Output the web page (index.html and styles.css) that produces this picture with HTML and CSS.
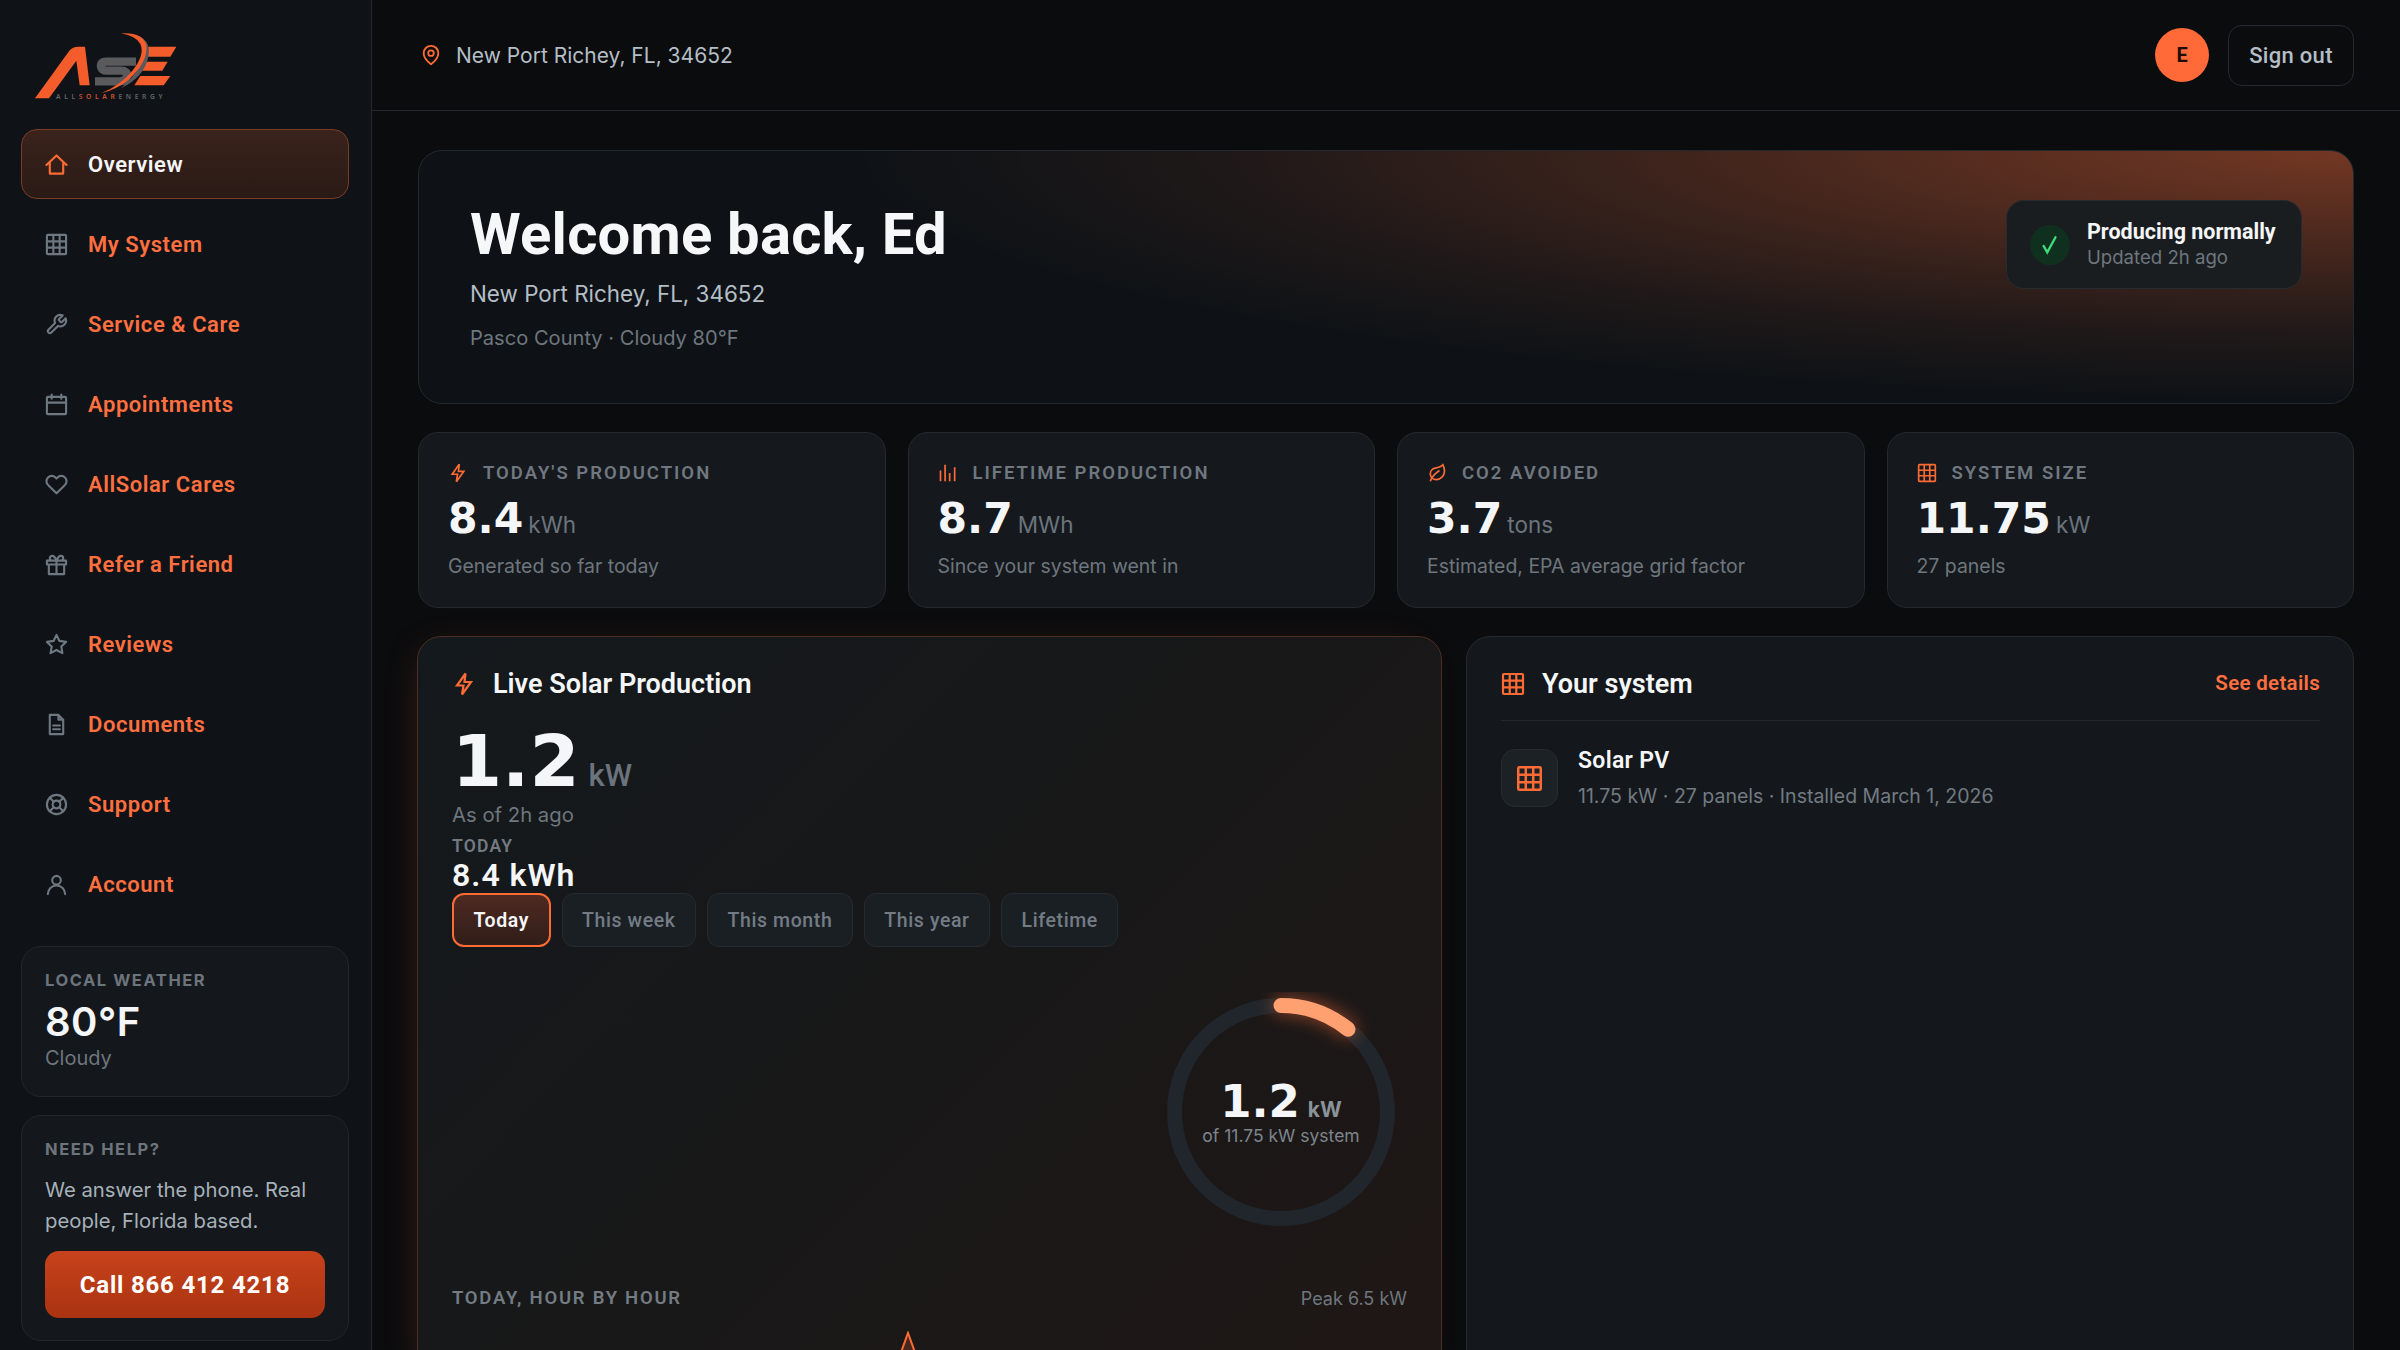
FILE: index.html
```html
<!DOCTYPE html>
<html lang="en">
<head>
<meta charset="utf-8">
<title>AllSolar Energy</title>
<link rel="stylesheet" href="styles.css">
</head>
<body>
<svg class="defs" width="0" height="0" aria-hidden="true">
  <symbol id="i-grid" viewBox="0 0 24 24"><rect x="2" y="2" width="20" height="20" rx="1"/><path d="M2 8.7h20M2 15.3h20M8.7 2v20M15.3 2v20"/></symbol>
  <symbol id="i-bolt" viewBox="0 0 24 24"><path d="M13.5 1.5 5 13.5h6.5L10 22.5l9-12.5h-6.5z"/></symbol>
</svg>
<div class="app">
  <aside class="sidebar">
    <svg class="logo" viewBox="0 0 510 270" width="170" height="90">
      <path class="lo" d="M42 235 145 92Q155 80 172 80H192L206 196H176L166 122 84 235Z"/>
      <path class="ls" d="M345 125H255Q238 125 240 140Q243 152 258 152H300Q320 152 318 168Q316 184 296 184H222"/>
      <path class="lo" d="M382 80H466L448 110H372ZM372 125H440L424 152H362ZM358 168H448L428 196H340Z"/>
      <path class="lg" d="M345 46Q392 60 382 110Q370 170 300 205Q355 160 368 105Q374 70 345 46Z"/>
      <path class="lo" d="M300 40Q366 36 376 76Q382 126 322 180Q284 210 240 220Q300 196 336 150Q372 104 358 72Q346 48 300 40Z"/>
      <text class="logo-text" x="105" y="238"><tspan class="lt-g">ALL</tspan><tspan class="lt-o">SOLAR</tspan><tspan class="lt-g">ENERGY</tspan></text>
    </svg>
    <nav class="nav">
      <a class="nav-item active"><svg class="ic" viewBox="0 0 24 24"><path d="M1.5 12.5 12 2.5l10.5 10M5 10v11.5h14V10"/></svg><span>Overview</span></a>
      <a class="nav-item"><svg class="ic"><use href="#i-grid"/></svg><span>My System</span></a>
      <a class="nav-item"><svg class="ic" viewBox="0 0 24 24"><path d="M14.7 6.3a1 1 0 0 0 0 1.4l1.6 1.6a1 1 0 0 0 1.4 0l3.77-3.77a6 6 0 0 1-7.94 7.94l-6.91 6.91a2.12 2.12 0 0 1-3-3l6.91-6.91a6 6 0 0 1 7.94-7.94l-3.76 3.76z"/></svg><span>Service &amp; Care</span></a>
      <a class="nav-item"><svg class="ic" viewBox="0 0 24 24"><rect x="2" y="4" width="20" height="18" rx="1"/><path d="M2 10h20M7 1.5V6M17 1.5V6"/></svg><span>Appointments</span></a>
      <a class="nav-item"><svg class="ic" viewBox="0 0 24 24"><path d="M20.84 4.61a5.5 5.5 0 0 0-7.78 0L12 5.67l-1.06-1.06a5.5 5.5 0 0 0-7.78 7.78l1.06 1.06L12 21.23l7.78-7.78 1.06-1.06a5.5 5.5 0 0 0 0-7.78z"/></svg><span>AllSolar Cares</span></a>
      <a class="nav-item"><svg class="ic" viewBox="0 0 24 24"><path d="M2 8h20v4H2zM12 8v14M4 12v10h16V12M7.5 8a2.5 2.5 0 0 1 0-5C10 3 12 8 12 8s2-5 4.500-5a2.500 2.500 0 0 1 0 5"/></svg><span>Refer a Friend</span></a>
      <a class="nav-item"><svg class="ic" viewBox="0 0 24 24"><polygon points="12 2 15.09 8.26 22 9.27 17 14.14 18.18 21.02 12 17.77 5.82 21.02 7 14.14 2 9.27 8.91 8.26 12 2"/></svg><span>Reviews</span></a>
      <a class="nav-item"><svg class="ic" viewBox="0 0 24 24"><path d="M14 2H5v20h14V7zM14 2v5h5M8.500 13h7M8.500 17h7"/></svg><span>Documents</span></a>
      <a class="nav-item"><svg class="ic" viewBox="0 0 24 24"><circle cx="12" cy="12" r="10"/><circle cx="12" cy="12" r="4"/><path d="m4.930 4.930 4.240 4.240M14.830 9.170l4.240-4.240M14.830 14.830l4.240 4.240M9.170 14.830l-4.240 4.240"/></svg><span>Support</span></a>
      <a class="nav-item"><svg class="ic" viewBox="0 0 24 24"><circle cx="12" cy="7.500" r="4.500"/><path d="M3 22a9 9 0 0 1 18 0"/></svg><span>Account</span></a>
    </nav>
    <section class="side-card weather">
      <div class="side-label">LOCAL WEATHER</div>
      <div class="temp">80°F</div>
      <div class="cond">Cloudy</div>
    </section>
    <section class="side-card help">
      <div class="side-label">NEED HELP?</div>
      <p class="help-text">We answer the phone. Real people, Florida based.</p>
      <a class="call">Call 866 412 4218</a>
    </section>
  </aside>
  <main class="main">
    <header class="topbar">
      <div class="loc"><svg class="ic-pin" viewBox="0 0 24 24"><path d="M20 10c0 6-8 12-8 12s-8-6-8-12a8 8 0 0 1 16 0Z"/><circle cx="12" cy="10" r="3"/></svg><span>New Port Richey, FL, 34652</span></div>
      <div class="top-right"><div class="avatar">E</div><a class="signout">Sign out</a></div>
    </header>
    <div class="content">
      <section class="hero">
        <div class="hero-copy">
          <h1>Welcome back, Ed</h1>
          <p class="hero-loc">New Port Richey, FL, 34652</p>
          <p class="hero-meta">Pasco County · Cloudy 80°F</p>
        </div>
        <div class="status">
          <span class="check"><svg viewBox="0 0 24 24"><path d="M5 13l4 7L18 3.500"/></svg></span>
          <div><div class="status-a">Producing normally</div><div class="status-b">Updated 2h ago</div></div>
        </div>
      </section>
      <section class="stats">
        <article class="stat">
          <div class="stat-label"><svg class="ic-o"><use href="#i-bolt"/></svg>TODAY'S PRODUCTION</div>
          <div class="stat-value"><b>8.4</b><span>kWh</span></div>
          <div class="stat-sub">Generated so far today</div>
        </article>
        <article class="stat">
          <div class="stat-label"><svg class="ic-o" viewBox="0 0 24 24"><path d="M3 9v13M8.500 2v20M14 12v10M20 5v17"/></svg>LIFETIME PRODUCTION</div>
          <div class="stat-value"><b>8.7</b><span>MWh</span></div>
          <div class="stat-sub">Since your system went in</div>
        </article>
        <article class="stat">
          <div class="stat-label"><svg class="ic-o" viewBox="0 0 24 24"><path d="M11 20A7 7 0 0 1 9.800 6.100C15.500 5 17 4.480 19 2c1 2 2 4.180 2 8 0 5.500-4.780 10-10 10Z"/><path d="M4 22c1-4 5-9 11-13"/></svg>CO2 AVOIDED</div>
          <div class="stat-value"><b>3.7</b><span>tons</span></div>
          <div class="stat-sub">Estimated, EPA average grid factor</div>
        </article>
        <article class="stat">
          <div class="stat-label"><svg class="ic-o"><use href="#i-grid"/></svg>SYSTEM SIZE</div>
          <div class="stat-value"><b>11.75</b><span>kW</span></div>
          <div class="stat-sub">27 panels</div>
        </article>
      </section>
      <section class="panels">
        <article class="panel live">
          <h2 class="panel-title"><svg class="ic-title"><use href="#i-bolt"/></svg>Live Solar Production</h2>
          <div class="big"><b>1.2</b><span>kW</span></div>
          <div class="asof">As of 2h ago</div>
          <div class="today-label">TODAY</div>
          <div class="today-val">8.4 kWh</div>
          <div class="tabs">
            <a class="tab on">Today</a><a class="tab">This week</a><a class="tab">This month</a><a class="tab">This year</a><a class="tab">Lifetime</a>
          </div>
          <div class="gauge-row">
            <div class="gauge">
              <svg viewBox="0 0 240 240" width="240" height="240">
                <circle class="g-track" cx="120" cy="120" r="106.500"/>
                <path class="g-glow" d="M120 13.500A106.500 106.500 0 0 1 187 37.200"/>
                <path class="g-arc" d="M120 13.500A106.500 106.500 0 0 1 187 37.200"/>
              </svg>
              <div class="g-center">
                <div class="g-val"><b>1.2</b><span>kW</span></div>
                <div class="g-sub">of 11.75 kW system</div>
              </div>
            </div>
          </div>
          <div class="chart-head"><span class="chart-title">TODAY, HOUR BY HOUR</span><span class="chart-peak">Peak 6.5 kW</span></div>
          <svg class="chart" viewBox="0 0 954 60" width="954" height="60"><path class="c-fill" d="M435 60 456 2 477 60Z"/><path class="c-line" d="M435 60 456 2 477 60"/></svg>
        </article>
        <article class="panel sys">
          <div class="sys-head">
            <h2 class="panel-title"><svg class="ic-title grid"><use href="#i-grid"/></svg>Your system</h2>
            <a class="details">See details</a>
          </div>
          <div class="sys-row">
            <span class="sys-ic"><svg class="ic-title grid"><use href="#i-grid"/></svg></span>
            <div><div class="sys-name">Solar PV</div><div class="sys-sub">11.75 kW · 27 panels · Installed March 1, 2026</div></div>
          </div>
        </article>
      </section>
    </div>
  </main>
</div>
</body>
</html>
```
FILE: styles.css
```css
*{box-sizing:border-box}
html,body{margin:0;height:1350px;overflow:hidden;background:#0b0c0e}
body{font-family:"Inter","Liberation Sans",sans-serif;color:#f5f6f8}
.defs{position:absolute}
a{color:inherit;text-decoration:none}
h1,h2,p{margin:0}
svg{display:block;flex:none}
symbol *{fill:none}
.app{display:flex;height:1350px}

.sidebar{width:372px;flex:none;background:#0f1317;border-right:1px solid #23272c;padding:20px 22px 0 21px;display:flex;flex-direction:column}
.logo{margin-bottom:19px}
.lo{fill:#f45d2b}
.lg{fill:#5a5a5c}
.ls{fill:none;stroke:#5a5a5c;stroke-width:25}
.logo-text{font:600 20px "Noto Sans",sans-serif;letter-spacing:11px}
.lt-g{fill:#65686b}
.lt-o{fill:#d4522a}
.nav{display:flex;flex-direction:column;gap:10px}
.nav-item{height:70px;display:flex;align-items:center;gap:20px;padding-left:23px;border:1px solid transparent;border-radius:16px;font:600 22px "Roboto",sans-serif;letter-spacing:.55px;color:#ff6f40}
.nav-item.active{color:#f5f6f8;background:linear-gradient(180deg,#3a231c,#2a1a15);border-color:#7b3c25}
.ic{width:23px;height:23px;fill:none;stroke:#6e7881;stroke-width:2.200;stroke-linejoin:round;stroke-linecap:round}
.ic use,.ic-o use,.ic-title use{fill:none}
.active .ic{stroke:#ff6b35}
.side-card{background:#14181c;border:1px solid #23272c;border-radius:20px;padding:24px 23px}
.weather{height:151px;margin-top:27px;padding-top:23px}
.help{height:226px;margin-top:18px;padding-top:23px}
.side-label{font:700 16.500px/20px "Inter",sans-serif;letter-spacing:1.550px;color:#6c747c}
.temp{font:600 40px/44px "Inter",sans-serif;margin-top:10px;letter-spacing:.5px}
.cond{font-size:20px;line-height:24px;color:#6e767e;margin-top:2px}
.help-text{font-size:20.300px;line-height:31px;color:#a7b1b9;margin-top:15px}
.call{display:flex;align-items:center;justify-content:center;height:67px;margin-top:15px;border-radius:14px;background:linear-gradient(180deg,#c7421b,#aa3311);font:700 24px "Roboto",sans-serif;letter-spacing:.8px;color:#fff}

.main{flex:1;min-width:0;background:#0b0c0e}
.topbar{height:111px;border-bottom:1px solid #23262b;padding:0 46px 0 48px;display:flex;align-items:center;justify-content:space-between}
.loc{display:flex;align-items:center;gap:14px;font-size:21px;color:#b4bec6}
.ic-pin{width:22px;height:22px;fill:none;stroke:#ff6b35;stroke-width:2}
.top-right{display:flex;align-items:center;gap:19px}
.avatar{width:54px;height:54px;border-radius:50%;background:#ff6a38;color:#1d0d06;display:flex;align-items:center;justify-content:center;font:700 20px "Roboto",sans-serif}
.signout{height:61px;width:126px;display:flex;align-items:center;justify-content:center;border:1px solid #262a30;border-radius:14px;font:500 22px "Roboto",sans-serif;letter-spacing:.3px;color:#b4bec6}

.content{padding:39px 46px 0;display:flex;flex-direction:column;gap:28px}
.hero{height:254px;border:1px solid #24292f;border-radius:24px;padding:50px 51px 0 51px;display:flex;justify-content:space-between;align-items:flex-start;background:radial-gradient(ellipse 1500px 248px at 100% 0,rgba(255,107,53,.42),rgba(255,107,53,.3) 25%,rgba(255,107,53,.18) 50%,rgba(255,107,53,.07) 75%,rgba(255,107,53,0) 100%),#0e1216}
h1{font:700 58px/66px "Roboto",sans-serif;letter-spacing:.2px;color:#f6f7f9}
.hero-loc{font-size:22.400px;line-height:30px;color:#b4bec6;margin-top:12px}
.hero-meta{font-size:20.100px;line-height:26px;color:#6e767e;margin-top:16px}
.status{width:296px;height:89px;margin-top:-1px;background:#1a1d20;border:1px solid #262b30;border-radius:18px;display:flex;align-items:center;gap:17px;padding-left:23px}
.check{width:40px;height:40px;border-radius:50%;background:#10301f;display:flex;align-items:center;justify-content:center}
.check svg{width:22px;height:22px;fill:none;stroke:#3fdc78;stroke-width:2.500;stroke-linecap:round}
.status-a{font:700 21.500px/26px "Roboto",sans-serif}
.status-b{font-size:18.600px;line-height:25px;color:#6e767e}

.stats{display:grid;grid-template-columns:repeat(4,1fr);gap:22px}
.stat{height:176px;background:#15191d;border:1px solid #252a2f;border-radius:20px;padding:26px 29px 0}
.stat-label{display:flex;align-items:center;gap:15px;height:28px;font:600 18.500px "Roboto",sans-serif;letter-spacing:2px;color:#6f7780}
.ic-o{width:20px;height:20px;fill:none;stroke:#ff6b35;stroke-width:2}
.stat-value{display:flex;align-items:baseline;gap:5px;margin-top:7px;line-height:50px;height:50px}
.stat-value b{font:700 42.500px/50px "DejaVu Sans",sans-serif}
.stat-value span{font-size:22.500px;color:#6b747d}
.stat-sub{font-size:19.450px;line-height:26px;color:#6e767e;margin-top:9px}

.panels{display:grid;grid-template-columns:1025px 888px;gap:24px;margin-left:-1px}
.panel{height:760px;border-radius:24px;border:1px solid #252a2f;background:#14181c}
.live{background:linear-gradient(135deg,#14191d 0%,#171819 40%,#1f1715 100%);border-color:#4b2d22;padding:28px 34px 0;box-shadow:-10px 0 40px -20px rgba(255,107,53,.25)}
.sys{padding:28px 33px 0 34px}
.panel-title{display:flex;align-items:center;gap:17px;font:600 27px/38px "Roboto",sans-serif;color:#f5f6f8}
.ic-title{width:24px;height:24px;fill:none;stroke:#ff6b35;stroke-width:2.200}
.big{display:flex;align-items:baseline;gap:9px;height:72px;margin-top:22px}
.big b{font:700 72px/72px "DejaVu Sans",sans-serif}
.big span{font:500 31px "Roboto",sans-serif;color:#6b747d}
.asof{font-size:20.300px;line-height:26px;color:#6e767e;margin-top:5px}
.today-label{font:600 17.500px/20px "Roboto",sans-serif;letter-spacing:1.200px;color:#727a82;margin-top:8px}
.today-val{font:600 32px/34px "Roboto",sans-serif;margin-top:2px;letter-spacing:1px}
.tabs{display:flex;gap:11px;margin-top:1px}
.tab{height:54px;padding:0 19.500px;display:flex;align-items:center;border:1px solid #262b31;border-radius:12px;background:#1a1f24;font:500 19.500px "Roboto",sans-serif;letter-spacing:.6px;color:#737c85}
.tab.on{background:linear-gradient(180deg,#4e2a22,#301d18);border:2px solid #ff6b35;color:#f5f6f8;font-weight:600}
.gauge-row{display:flex;justify-content:flex-end;padding-right:6px;margin-top:45px}
.gauge{position:relative;width:240px;height:240px}
.g-track{fill:none;stroke:#20262c;stroke-width:15}
.g-arc{fill:none;stroke:#ffa070;stroke-width:15;stroke-linecap:round}
.g-glow{fill:none;stroke:#ff6b35;stroke-width:16;stroke-linecap:round;opacity:.55;filter:blur(9px)}
.g-center{position:absolute;left:0;right:0;top:88px;text-align:center}
.g-val{display:flex;justify-content:center;align-items:baseline;gap:8px;height:44px}
.g-val b{font:700 45px/44px "DejaVu Sans",sans-serif}
.g-val span{font:700 21px "Inter",sans-serif;color:#8a929a}
.g-sub{font-size:17.500px;line-height:22px;color:#7d858d;margin-top:1px}
.chart-head{display:flex;justify-content:space-between;align-items:center;margin-top:54px;height:24px}
.chart-title{font:600 18.500px "Roboto",sans-serif;letter-spacing:1.750px;color:#737b83}
.chart-peak{font-size:18px;color:#6e767e}
.chart{margin-top:21px}
.c-line{fill:none;stroke:#ff6b35;stroke-width:2}
.c-fill{fill:rgba(255,107,53,.2)}
.sys-head{display:flex;justify-content:space-between;align-items:center;height:56px;border-bottom:1px solid #23282d;padding-bottom:18px}
.details{font:600 20.500px "Roboto",sans-serif;color:#ff6f40;letter-spacing:.3px;margin-top:-2px}
.sys-row{display:flex;gap:20px;margin-top:25px;align-items:center}
.sys-ic{width:57px;height:58px;border-radius:14px;background:#1c2125;border:1px solid #272c31;display:flex;align-items:center;justify-content:center}
.sys-ic .ic-title{width:27px;height:27px}
.sys-name{font:600 23px/30px "Roboto",sans-serif;letter-spacing:.3px}
.sys-sub{font-size:19.500px;line-height:28px;color:#737b83;margin-top:6px}
```
